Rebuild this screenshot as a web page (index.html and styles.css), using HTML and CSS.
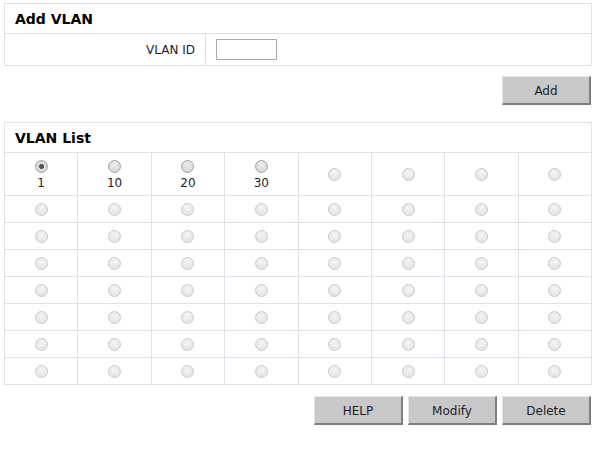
FILE: index.html
```html
<!DOCTYPE html>
<html>
<head>
<meta charset="utf-8">
<link rel="stylesheet" href="styles.css">
</head>
<body>
<div class="page">
  <table class="box add-box">
    <colgroup><col class="col-label"><col></colgroup>
    <tr><th colspan="2" class="title">Add VLAN</th></tr>
    <tr>
      <td class="label">VLAN ID</td>
      <td class="field"><input type="text" class="text-in"></td>
    </tr>
  </table>

  <div class="actions add-actions">
    <button class="btn">Add</button>
  </div>

  <table class="box list-box">
    <tr><th colspan="8" class="title">VLAN List</th></tr>
    <tr class="first">
      <td><input type="radio" name="v" class="radio on" checked><div class="num">1</div></td>
      <td><input type="radio" name="v" class="radio on"><div class="num">10</div></td>
      <td><input type="radio" name="v" class="radio on"><div class="num">20</div></td>
      <td><input type="radio" name="v" class="radio on"><div class="num">30</div></td>
      <td><input type="radio" class="radio" disabled></td>
      <td><input type="radio" class="radio" disabled></td>
      <td><input type="radio" class="radio" disabled></td>
      <td><input type="radio" class="radio" disabled></td>
    </tr>
    <tr><td><input type="radio" class="radio" disabled></td><td><input type="radio" class="radio" disabled></td><td><input type="radio" class="radio" disabled></td><td><input type="radio" class="radio" disabled></td><td><input type="radio" class="radio" disabled></td><td><input type="radio" class="radio" disabled></td><td><input type="radio" class="radio" disabled></td><td><input type="radio" class="radio" disabled></td></tr>
    <tr><td><input type="radio" class="radio" disabled></td><td><input type="radio" class="radio" disabled></td><td><input type="radio" class="radio" disabled></td><td><input type="radio" class="radio" disabled></td><td><input type="radio" class="radio" disabled></td><td><input type="radio" class="radio" disabled></td><td><input type="radio" class="radio" disabled></td><td><input type="radio" class="radio" disabled></td></tr>
    <tr><td><input type="radio" class="radio" disabled></td><td><input type="radio" class="radio" disabled></td><td><input type="radio" class="radio" disabled></td><td><input type="radio" class="radio" disabled></td><td><input type="radio" class="radio" disabled></td><td><input type="radio" class="radio" disabled></td><td><input type="radio" class="radio" disabled></td><td><input type="radio" class="radio" disabled></td></tr>
    <tr><td><input type="radio" class="radio" disabled></td><td><input type="radio" class="radio" disabled></td><td><input type="radio" class="radio" disabled></td><td><input type="radio" class="radio" disabled></td><td><input type="radio" class="radio" disabled></td><td><input type="radio" class="radio" disabled></td><td><input type="radio" class="radio" disabled></td><td><input type="radio" class="radio" disabled></td></tr>
    <tr><td><input type="radio" class="radio" disabled></td><td><input type="radio" class="radio" disabled></td><td><input type="radio" class="radio" disabled></td><td><input type="radio" class="radio" disabled></td><td><input type="radio" class="radio" disabled></td><td><input type="radio" class="radio" disabled></td><td><input type="radio" class="radio" disabled></td><td><input type="radio" class="radio" disabled></td></tr>
    <tr><td><input type="radio" class="radio" disabled></td><td><input type="radio" class="radio" disabled></td><td><input type="radio" class="radio" disabled></td><td><input type="radio" class="radio" disabled></td><td><input type="radio" class="radio" disabled></td><td><input type="radio" class="radio" disabled></td><td><input type="radio" class="radio" disabled></td><td><input type="radio" class="radio" disabled></td></tr>
    <tr><td><input type="radio" class="radio" disabled></td><td><input type="radio" class="radio" disabled></td><td><input type="radio" class="radio" disabled></td><td><input type="radio" class="radio" disabled></td><td><input type="radio" class="radio" disabled></td><td><input type="radio" class="radio" disabled></td><td><input type="radio" class="radio" disabled></td><td><input type="radio" class="radio" disabled></td></tr>
  </table>

  <div class="actions bottom-actions">
    <button class="btn">HELP</button>
    <button class="btn">Modify</button>
    <button class="btn">Delete</button>
  </div>
</div>
</body>
</html>
```

FILE: styles.css
```css
html, body {
  margin: 0;
  padding: 0;
  background: #ffffff;
}
body {
  font-family: "DejaVu Sans", Verdana, sans-serif;
  font-size: 12px;
  color: #1e1e2a;
}
.page {
  padding: 3px 2px 0 4px;
  width: 588px;
}
.box {
  width: 588px;
  border-collapse: collapse;
  table-layout: fixed;
}
.box th, .box td {
  border: 1px solid #dbe2ea;
  padding: 0;
}
.col-label {
  width: 201px;
}
.title {
  height: 29px;
  text-align: left;
  padding-left: 10px !important;
  font-size: 14px;
  font-weight: bold;
  color: #000;
  vertical-align: middle;
}
.label {
  height: 31px;
  text-align: right;
  padding-right: 10px !important;
  vertical-align: middle;
}
.field {
  padding-left: 10px !important;
  vertical-align: middle;
}
.text-in {
  display: block;
  box-sizing: border-box;
  width: 61px;
  height: 21px;
  margin: 0;
  border: 1px solid #a9a9a9;
  background: #fff;
  padding: 0 3px;
}
.actions {
  display: flex;
  justify-content: flex-end;
  gap: 5px;
  padding-right: 1px;
}
.add-actions {
  margin-top: 10px;
  margin-bottom: 17px;
}
.bottom-actions {
  margin-top: 11px;
}
.btn {
  box-sizing: border-box;
  width: 89px;
  height: 29px;
  margin: 0;
  padding: 1px 0 0;
  font-family: "DejaVu Sans", Verdana, sans-serif;
  font-size: 12px;
  color: #1e1e2a;
  background: #c8c8c8;
  border-style: solid;
  border-width: 1px 2px 2px 1px;
  border-color: #e4e4e4 #7e7e7e #7e7e7e #e4e4e4;
}
.list-box td {
  height: 26px;
  text-align: center;
  vertical-align: middle;
}
.list-box tr.first td {
  height: 42px;
}
.radio {
  -webkit-appearance: none;
  appearance: none;
  display: block;
  box-sizing: border-box;
  width: 13px;
  height: 13px;
  margin: 1px auto 0;
  border-radius: 50%;
  border: 1px solid #cbcbcb;
  background: radial-gradient(circle at 50% 35%, #f4f4f4 0%, #e8e8e8 60%, #dedede 100%);
}
.radio.on {
  margin-top: 2px;
  border-color: #a6a6a6;
  background: radial-gradient(circle at 50% 35%, #ececec 0%, #dcdcdc 60%, #cfcfcf 100%);
}
.radio.on:checked {
  background: radial-gradient(circle, #555 0%, #555 28%, #dcdcdc 34%, #d2d2d2 100%);
}
.num {
  margin-top: 3px;
  line-height: 14px;
  font-size: 12px;
}
```
